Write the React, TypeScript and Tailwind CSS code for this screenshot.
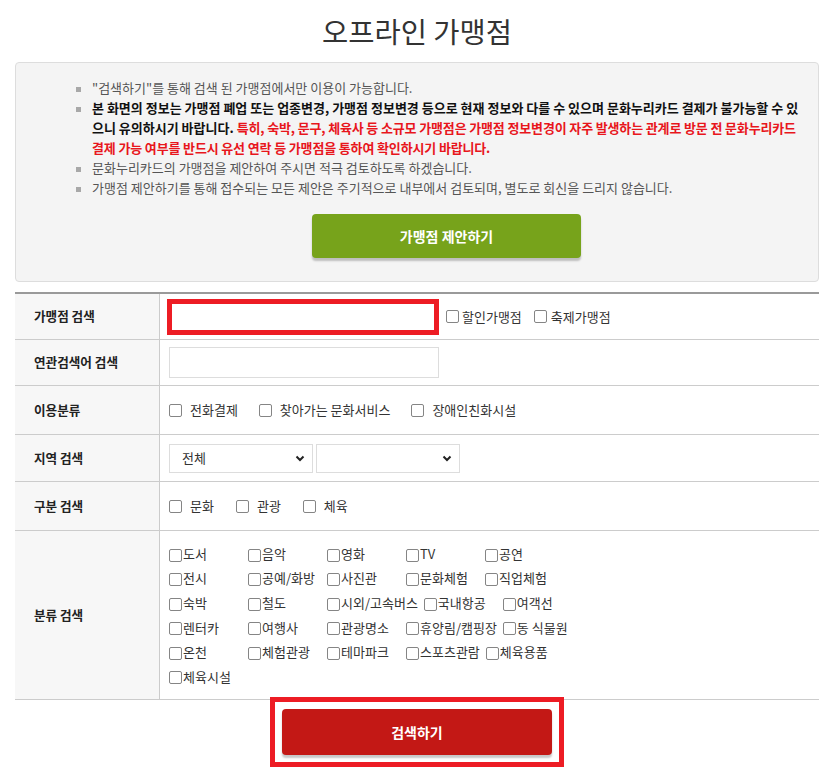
import React from "react";

const font = "font-['Noto_Sans_CJK_KR','Noto_Sans',sans-serif]";

const categories = [
  ["도서", "음악", "영화", "TV", "공연"],
  ["전시", "공예/화방", "사진관", "문화체험", "직업체험"],
  ["숙박", "철도", "시외/고속버스", "국내항공", "여객선"],
  ["렌터카", "여행사", "관광명소", "휴양림/캠핑장", "동 식물원"],
  ["온천", "체험관광", "테마파크", "스포츠관람", "체육용품"],
  ["체육시설"],
];

function Box({ className = "" }: { className?: string }) {
  return (
    <span
      className={`inline-block w-[13px] h-[13px] shrink-0 border border-[#858585] rounded-[2px] bg-white ${className}`}
    />
  );
}

function Chevron() {
  return (
    <svg width="10" height="7" viewBox="0 0 10 7" className="shrink-0">
      <path d="M1.5 1.5 L5 5 L8.5 1.5" fill="none" stroke="#222" strokeWidth="2" />
    </svg>
  );
}

function Row({
  label,
  height,
  last,
  children,
}: {
  label: string;
  height: string;
  last?: boolean;
  children: React.ReactNode;
}) {
  return (
    <div className={`flex ${height} border-b border-[#cccccc]`}>
      <div className="w-[145px] shrink-0 bg-[#f7f7f7] border-r border-[#cccccc] flex items-center pl-[19px] text-[12.6px] font-bold text-[#222]">
        {label}
      </div>
      <div className={`flex-1 flex ${last ? "flex-col justify-center" : "items-center"} pl-[9px] text-[13px] text-[#333]`}>
        {children}
      </div>
    </div>
  );
}

export default function App() {
  return (
    <div className={`w-[834px] bg-white px-[15px] pb-[5px] ${font}`}>
      <div className="h-[62px] flex items-center justify-center">
        <h1 className="text-[28.5px] font-normal text-[#333] leading-none">오프라인 가맹점</h1>
      </div>

      <div className="border border-[#dddddd] rounded-[4px] bg-[#f4f4f4] pt-[15px] pb-[23px]">
        <ul className="pl-[60px] pr-[17px] text-[13px] leading-[20px]">
          <li className="flex text-[#555]">
            <span className="w-[5px] h-[5px] bg-[#a8a8a8] mt-[9px] mr-[11px] shrink-0" />
            <span>"검색하기"를 통해 검색 된 가맹점에서만 이용이 가능합니다.</span>
          </li>
          <li className="flex font-bold text-[#111]">
            <span className="w-[5px] h-[5px] bg-[#a8a8a8] mt-[9px] mr-[11px] shrink-0" />
            <p>
              본 화면의 정보는 가맹점 폐업 또는 업종변경, 가맹점 정보변경 등으로 현재 정보와 다를 수 있으며 문화누리카드 결제가 불가능할 수 있으니 유의하시기 바랍니다.{" "}
              <span className="text-[#e8161c] tracking-[-0.15px]">
                특히, 숙박, 문구, 체육사 등 소규모 가맹점은 가맹점 정보변경이 자주 발생하는 관계로 방문 전 문화누리카드 결제 가능 여부를 반드시 유선 연락 등 가맹점을 통하여 확인하시기 바랍니다.
              </span>
            </p>
          </li>
          <li className="flex text-[#555]">
            <span className="w-[5px] h-[5px] bg-[#a8a8a8] mt-[9px] mr-[11px] shrink-0" />
            <span>문화누리카드의 가맹점을 제안하여 주시면 적극 검토하도록 하겠습니다.</span>
          </li>
          <li className="flex text-[#555]">
            <span className="w-[5px] h-[5px] bg-[#a8a8a8] mt-[9px] mr-[11px] shrink-0" />
            <span>가맹점 제안하기를 통해 접수되는 모든 제안은 주기적으로 내부에서 검토되며, 별도로 회신을 드리지 않습니다.</span>
          </li>
        </ul>
        <div className="pl-[76px] pr-[17px] mt-[16px] flex justify-center">
          <button className="w-[269px] h-[44px] rounded-[4px] bg-[#77a31b] text-white text-[14px] font-bold shadow-[0_3px_2px_rgba(0,0,0,0.22)]">
            가맹점 제안하기
          </button>
        </div>
      </div>

      <div className="mt-[10px] border-t-2 border-[#9a9a9a]">
        <Row label="가맹점 검색" height="h-[46px]">
          <input className="w-[272px] h-[36px] ml-[-2px] border-[5px] border-[#ed1c24] bg-white outline-none" />
          <Box className="ml-[7px]" />
          <span className="ml-[3px]">할인가맹점</span>
          <Box className="ml-[12px]" />
          <span className="ml-[4px]">축제가맹점</span>
        </Row>
        <Row label="연관검색어 검색" height="h-[46px]">
          <input className="w-[270px] h-[31px] border border-[#dddddd] bg-white outline-none" />
        </Row>
        <Row label="이용분류" height="h-[49px]">
          <div className="flex items-center gap-[21px]">
            {["전화결제", "찾아가는 문화서비스", "장애인친화시설"].map((t) => (
              <label key={t} className="flex items-center">
                <Box />
                <span className="ml-[8px]">{t}</span>
              </label>
            ))}
          </div>
        </Row>
        <Row label="지역 검색" height="h-[47px]">
          <div className="flex items-center gap-[3px]">
            <div className="w-[144px] h-[29px] border border-[#dddddd] bg-white flex items-center justify-between pl-[12px] pr-[7px]">
              <span>전체</span>
              <Chevron />
            </div>
            <div className="w-[144px] h-[29px] border border-[#dddddd] bg-white flex items-center justify-end pr-[7px]">
              <Chevron />
            </div>
          </div>
        </Row>
        <Row label="구분 검색" height="h-[49px]">
          <div className="flex items-center gap-[22px]">
            {["문화", "관광", "체육"].map((t) => (
              <label key={t} className="flex items-center">
                <Box />
                <span className="ml-[8px]">{t}</span>
              </label>
            ))}
          </div>
        </Row>
        <Row label="분류 검색" height="h-[169px]" last>
          <div className="flex flex-col">
            {categories.map((row, i) => (
              <div key={i} className="flex h-[24.6px] items-center">
                {row.map((t) => (
                  <label key={t} className="flex items-center min-w-[79px] pr-[6px] whitespace-nowrap">
                    <Box className="mt-[3px]" />
                    <span className="ml-[1px]">{t}</span>
                  </label>
                ))}
              </div>
            ))}
          </div>
        </Row>
      </div>

      <div className="flex justify-center mt-[-3px]">
        <div className="border-[5px] border-[#ed1c24] p-[7px] bg-white">
          <button className="w-[270px] h-[46px] rounded-[4px] bg-[#c31815] text-white text-[14px] font-bold shadow-[0_3px_2px_rgba(0,0,0,0.22)]">
            검색하기
          </button>
        </div>
      </div>
    </div>
  );
}
